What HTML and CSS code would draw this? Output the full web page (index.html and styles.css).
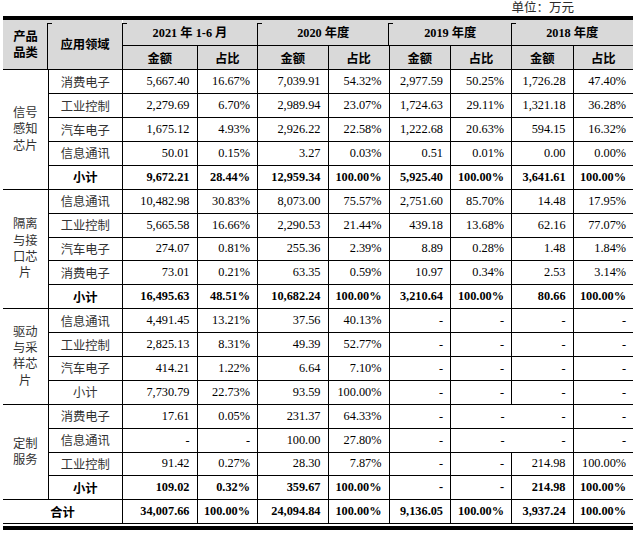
FILE: index.html
```html
<!DOCTYPE html>
<html lang="zh-CN">
<head>
<meta charset="utf-8">
<title>产品收入构成</title>
<link rel="stylesheet" href="styles.css">
</head>
<body>
<div class="page">
  <div class="unit">单位：万元</div>
  <div class="rule-top"></div>
  <table class="data">
    <colgroup>
      <col class="w-cat">
      <col class="w-field">
      <col class="w-a1">
      <col class="w-p1">
      <col class="w-a2">
      <col class="w-p2">
      <col class="w-a3">
      <col class="w-p3">
      <col class="w-a4">
      <col class="w-p4">
    </colgroup>
    <thead>
      <tr class="h1">
        <th rowspan="2" class="h-cat">产品<br>品类</th>
        <th rowspan="2" class="mark">应用领域</th>
        <th colspan="2" class="mark grp">2021 年 1-6 月</th>
        <th colspan="2" class="mark grp">2020 年度</th>
        <th colspan="2" class="mark grp">2019 年度</th>
        <th colspan="2" class="mark grp">2018 年度</th>
      </tr>
      <tr class="h2">
        <th>金额</th><th>占比</th>
        <th>金额</th><th>占比</th>
        <th>金额</th><th>占比</th>
        <th>金额</th><th>占比</th>
      </tr>
    </thead>
    <tbody>
      <tr>
        <td rowspan="5" class="cat">信号<br>感知<br>芯片</td>
        <td class="field">消费电子</td>
        <td>5,667.40</td><td>16.67%</td><td>7,039.91</td><td>54.32%</td><td>2,977.59</td><td>50.25%</td><td>1,726.28</td><td>47.40%</td>
      </tr>
      <tr>
        <td class="field">工业控制</td>
        <td>2,279.69</td><td>6.70%</td><td>2,989.94</td><td>23.07%</td><td>1,724.63</td><td>29.11%</td><td>1,321.18</td><td>36.28%</td>
      </tr>
      <tr>
        <td class="field">汽车电子</td>
        <td>1,675.12</td><td>4.93%</td><td>2,926.22</td><td>22.58%</td><td>1,222.68</td><td>20.63%</td><td>594.15</td><td>16.32%</td>
      </tr>
      <tr>
        <td class="field">信息通讯</td>
        <td>50.01</td><td>0.15%</td><td>3.27</td><td>0.03%</td><td>0.51</td><td>0.01%</td><td>0.00</td><td>0.00%</td>
      </tr>
      <tr class="sub">
        <td class="field">小计</td>
        <td>9,672.21</td><td>28.44%</td><td>12,959.34</td><td>100.00%</td><td>5,925.40</td><td>100.00%</td><td>3,641.61</td><td>100.00%</td>
      </tr>

      <tr>
        <td rowspan="5" class="cat">隔离<br>与接<br>口芯<br>片</td>
        <td class="field">信息通讯</td>
        <td>10,482.98</td><td>30.83%</td><td>8,073.00</td><td>75.57%</td><td>2,751.60</td><td>85.70%</td><td>14.48</td><td>17.95%</td>
      </tr>
      <tr>
        <td class="field">工业控制</td>
        <td>5,665.58</td><td>16.66%</td><td>2,290.53</td><td>21.44%</td><td>439.18</td><td>13.68%</td><td>62.16</td><td>77.07%</td>
      </tr>
      <tr>
        <td class="field">汽车电子</td>
        <td>274.07</td><td>0.81%</td><td>255.36</td><td>2.39%</td><td>8.89</td><td>0.28%</td><td>1.48</td><td>1.84%</td>
      </tr>
      <tr>
        <td class="field">消费电子</td>
        <td>73.01</td><td>0.21%</td><td>63.35</td><td>0.59%</td><td>10.97</td><td>0.34%</td><td>2.53</td><td>3.14%</td>
      </tr>
      <tr class="sub">
        <td class="field">小计</td>
        <td>16,495.63</td><td>48.51%</td><td>10,682.24</td><td>100.00%</td><td>3,210.64</td><td>100.00%</td><td>80.66</td><td>100.00%</td>
      </tr>

      <tr>
        <td rowspan="4" class="cat">驱动<br>与采<br>样芯<br>片</td>
        <td class="field">信息通讯</td>
        <td>4,491.45</td><td>13.21%</td><td>37.56</td><td>40.13%</td><td>-</td><td>-</td><td>-</td><td>-</td>
      </tr>
      <tr>
        <td class="field">工业控制</td>
        <td>2,825.13</td><td>8.31%</td><td>49.39</td><td>52.77%</td><td>-</td><td>-</td><td>-</td><td>-</td>
      </tr>
      <tr>
        <td class="field">汽车电子</td>
        <td>414.21</td><td>1.22%</td><td>6.64</td><td>7.10%</td><td>-</td><td>-</td><td>-</td><td>-</td>
      </tr>
      <tr>
        <td class="field">小计</td>
        <td>7,730.79</td><td>22.73%</td><td>93.59</td><td>100.00%</td><td>-</td><td>-</td><td>-</td><td>-</td>
      </tr>

      <tr>
        <td rowspan="4" class="cat">定制<br>服务</td>
        <td class="field">消费电子</td>
        <td>17.61</td><td>0.05%</td><td>231.37</td><td>64.33%</td><td>-</td><td class="nr">-</td><td class="nl">-</td><td>-</td>
      </tr>
      <tr>
        <td class="field">信息通讯</td>
        <td>-</td><td>-</td><td>100.00</td><td>27.80%</td><td>-</td><td class="nr">-</td><td class="nl">-</td><td>-</td>
      </tr>
      <tr>
        <td class="field">工业控制</td>
        <td>91.42</td><td>0.27%</td><td>28.30</td><td>7.87%</td><td>-</td><td>-</td><td>214.98</td><td>100.00%</td>
      </tr>
      <tr class="sub">
        <td class="field">小计</td>
        <td>109.02</td><td>0.32%</td><td>359.67</td><td>100.00%</td><td>-</td><td>-</td><td>214.98</td><td>100.00%</td>
      </tr>

      <tr class="sub total">
        <td colspan="2" class="total-label">合计</td>
        <td>34,007.66</td><td>100.00%</td><td>24,094.84</td><td>100.00%</td><td>9,136.05</td><td>100.00%</td><td>3,937.24</td><td>100.00%</td>
      </tr>
    </tbody>
  </table>
  <div class="rule-bottom"></div>
</div>
</body>
</html>
```

FILE: styles.css
```css
html, body {
  margin: 0;
  padding: 0;
  background: #ffffff;
}

body {
  font-family: "Liberation Serif", "Noto Sans CJK SC", serif;
  color: #000000;
}

.page {
  width: 630px;
  margin-left: 3px;
}

.unit {
  height: 16px;
  line-height: 16px;
  padding-top: 0;
  padding-right: 59px;
  box-sizing: border-box;
  font-size: 12.5px;
  text-align: right;
  color: #2a2a2a;
}

.rule-top {
  height: 3.5px;
  background: #000000;
}

.rule-bottom {
  height: 4px;
  margin-top: 1.5px;
  background: #000000;
}

.data {
  width: 630px;
  border-collapse: collapse;
  table-layout: fixed;
  font-size: 12.3px;
}

.w-cat { width: 45px; }
.w-field { width: 74.5px; }
.w-a1 { width: 74.5px; }
.w-p1 { width: 60.5px; }
.w-a2 { width: 70.5px; }
.w-p2 { width: 61px; }
.w-a3 { width: 61.5px; }
.w-p3 { width: 61px; }
.w-a4 { width: 61.5px; }
.w-p4 { width: 60px; }

.data td,
.data th {
  border: 1px solid #000000;
  padding: 0 7px 0 0;
  text-align: right;
  white-space: nowrap;
  vertical-align: middle;
}

.data tr > :last-child {
  border-right: none;
}

.data thead th {
  background: #d9d9d9;
  text-align: center;
  padding: 0;
  font-weight: 700;
}

.data .h1 {
  height: 26px;
}

.data .h2 {
  height: 24.3px;
}

.data .h1 th {
  border-top: none;
  border-left: none;
  border-right: none;
}

.data .h-cat {
  line-height: 16.5px;
  padding-top: 2px;
}

.data .mark {
  position: relative;
}

.data .mark::before {
  content: "";
  position: absolute;
  left: -1px;
  top: 3px;
  bottom: 0;
  width: 4px;
  border-left: 1px solid #000000;
  border-top: 1px solid #000000;
}

.data tbody tr {
  height: 23.9px;
}

.data .cat {
  border-left: none;
  text-align: center;
  padding: 0;
  line-height: 16.3px;
  color: #333333;
}

.data .field {
  text-align: center;
  padding: 0;
  color: #333333;
}

.data .sub {
  font-weight: 700;
}

.data .sub .field {
  color: #000000;
}

.data .total-label {
  border-left: none;
  text-align: center;
  padding: 0;
}

.data .nr {
  border-right: none;
}

.data .nl {
  border-left: none;
}
```
